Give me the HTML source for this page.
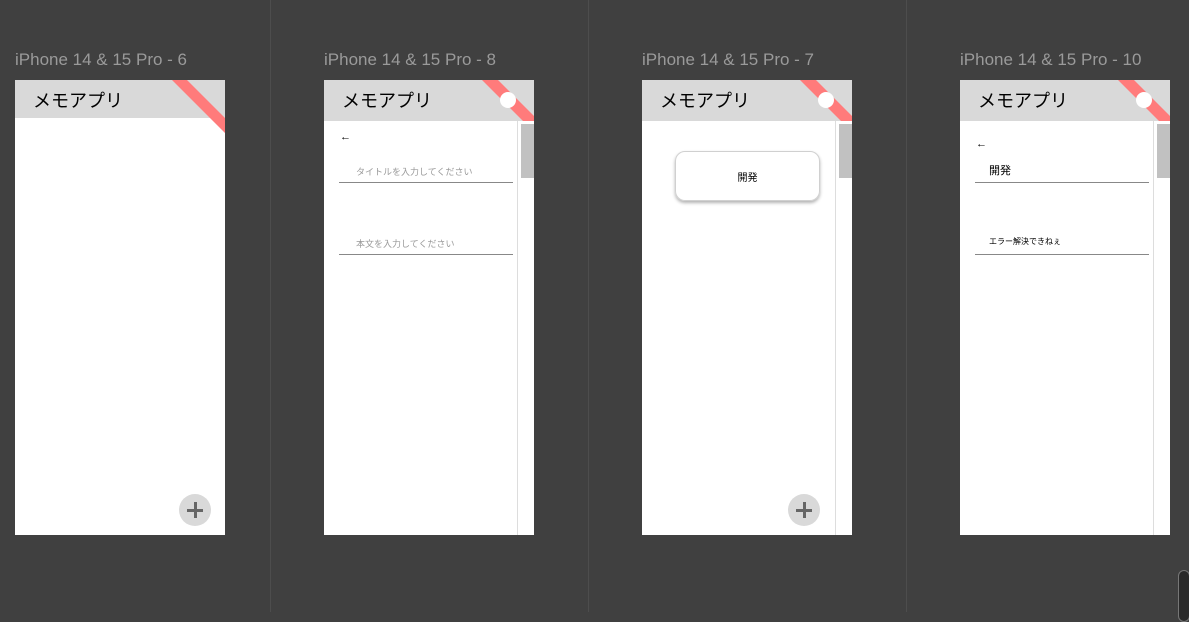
<!DOCTYPE html>
<html><head><meta charset="utf-8"><style>
body{margin:0;width:1189px;height:612px;background:#404040;position:relative;overflow:hidden;font-family:"Liberation Sans","Noto Sans CJK JP",sans-serif}
.sep{position:absolute;top:0;width:1px;height:612px;background:#4d4d4d}
.lbl{position:absolute;top:50px;font-size:17px;color:#9a9a9a}
.fr{position:absolute;top:80px;width:210px;height:455px;background:#fff;overflow:hidden}
.hd{position:absolute;left:0;top:0;width:210px;height:41px;background:#d9d9d9;overflow:hidden}
.ttl{position:absolute;left:18px;top:7px;font-size:18px;color:#000}
svg{position:absolute;left:0;top:0}
.circ{position:absolute;left:176px;top:12px;width:16px;height:16px;border-radius:50%;background:#fff}
.sb{position:absolute;left:193px;top:41px;width:17px;height:414px;background:#fff;border-left:1px solid #ddd}
.th{position:absolute;left:3px;top:3px;width:13px;height:54px;background:#c1c1c1}
.fab{position:absolute;width:32px;height:32px;border-radius:50%;background:#d9d9d9}
.fab:before{content:"";position:absolute;left:8px;top:15px;width:16px;height:2.5px;background:#666}
.fab:after{content:"";position:absolute;left:15px;top:8px;width:2.5px;height:16px;background:#666}
.ln{position:absolute;left:15px;width:174px;height:1px;background:#888}
.ph{position:absolute;left:32px;font-size:9px;color:#999}
.ar{position:absolute;left:16px;font-size:11px;color:#000}
</style></head><body>
<div class="sep" style="left:270px"></div><div class="sep" style="left:588px"></div><div class="sep" style="left:906px"></div>
<div class="lbl" style="left:15px">iPhone 14 &amp; 15 Pro - 6</div>
<div class="lbl" style="left:324px">iPhone 14 &amp; 15 Pro - 8</div>
<div class="lbl" style="left:642px">iPhone 14 &amp; 15 Pro - 7</div>
<div class="lbl" style="left:960px">iPhone 14 &amp; 15 Pro - 10</div>

<div class="fr" style="left:15px">
<div class="hd" style="height:38px"><div class="ttl" style="top:7px">メモアプリ</div></div>
<svg width="210" height="60"><polygon points="157,0 172,0 210,38 210,53" fill="#ff7b7b"/></svg>
<div class="fab" style="left:164px;top:414px"></div>
</div>

<div class="fr" style="left:324px">
<div class="hd"><div class="ttl">メモアプリ</div><svg width="210" height="41"><polygon points="158,0 174,0 210,36 210,52" fill="#ff7b7b"/></svg><div class="circ"></div></div>
<div class="sb"><div class="th"></div></div>
<div class="ar" style="top:51px">←</div>
<div class="ph" style="top:85px">タイトルを入力してください</div><div class="ln" style="top:102px"></div>
<div class="ph" style="top:157px">本文を入力してください</div><div class="ln" style="top:174px"></div>
</div>

<div class="fr" style="left:642px">
<div class="hd"><div class="ttl">メモアプリ</div><svg width="210" height="41"><polygon points="158,0 174,0 210,36 210,52" fill="#ff7b7b"/></svg><div class="circ"></div></div>
<div class="sb"><div class="th"></div></div>
<div style="position:absolute;left:33px;top:71px;width:143px;height:48px;border:1px solid #d0d0d0;border-radius:10px;box-shadow:0 2px 3px rgba(0,0,0,.3);text-align:center;line-height:54px;font-size:10px">開発</div>
<div class="fab" style="left:146px;top:414px"></div>
</div>

<div class="fr" style="left:960px">
<div class="hd"><div class="ttl">メモアプリ</div><svg width="210" height="41"><polygon points="158,0 174,0 210,36 210,52" fill="#ff7b7b"/></svg><div class="circ"></div></div>
<div class="sb"><div class="th"></div></div>
<div class="ar" style="top:58px">←</div>
<div style="position:absolute;left:29px;top:82px;font-size:11px">開発</div><div class="ln" style="top:102px"></div>
<div style="position:absolute;left:29px;top:156px;font-size:8px">エラー解決できねぇ</div><div class="ln" style="top:174px"></div>
</div>

<div style="position:absolute;left:1178px;top:570px;width:10px;height:50px;border:1px solid #777;border-radius:6px;background:#2a2a2a"></div>
</body></html>
